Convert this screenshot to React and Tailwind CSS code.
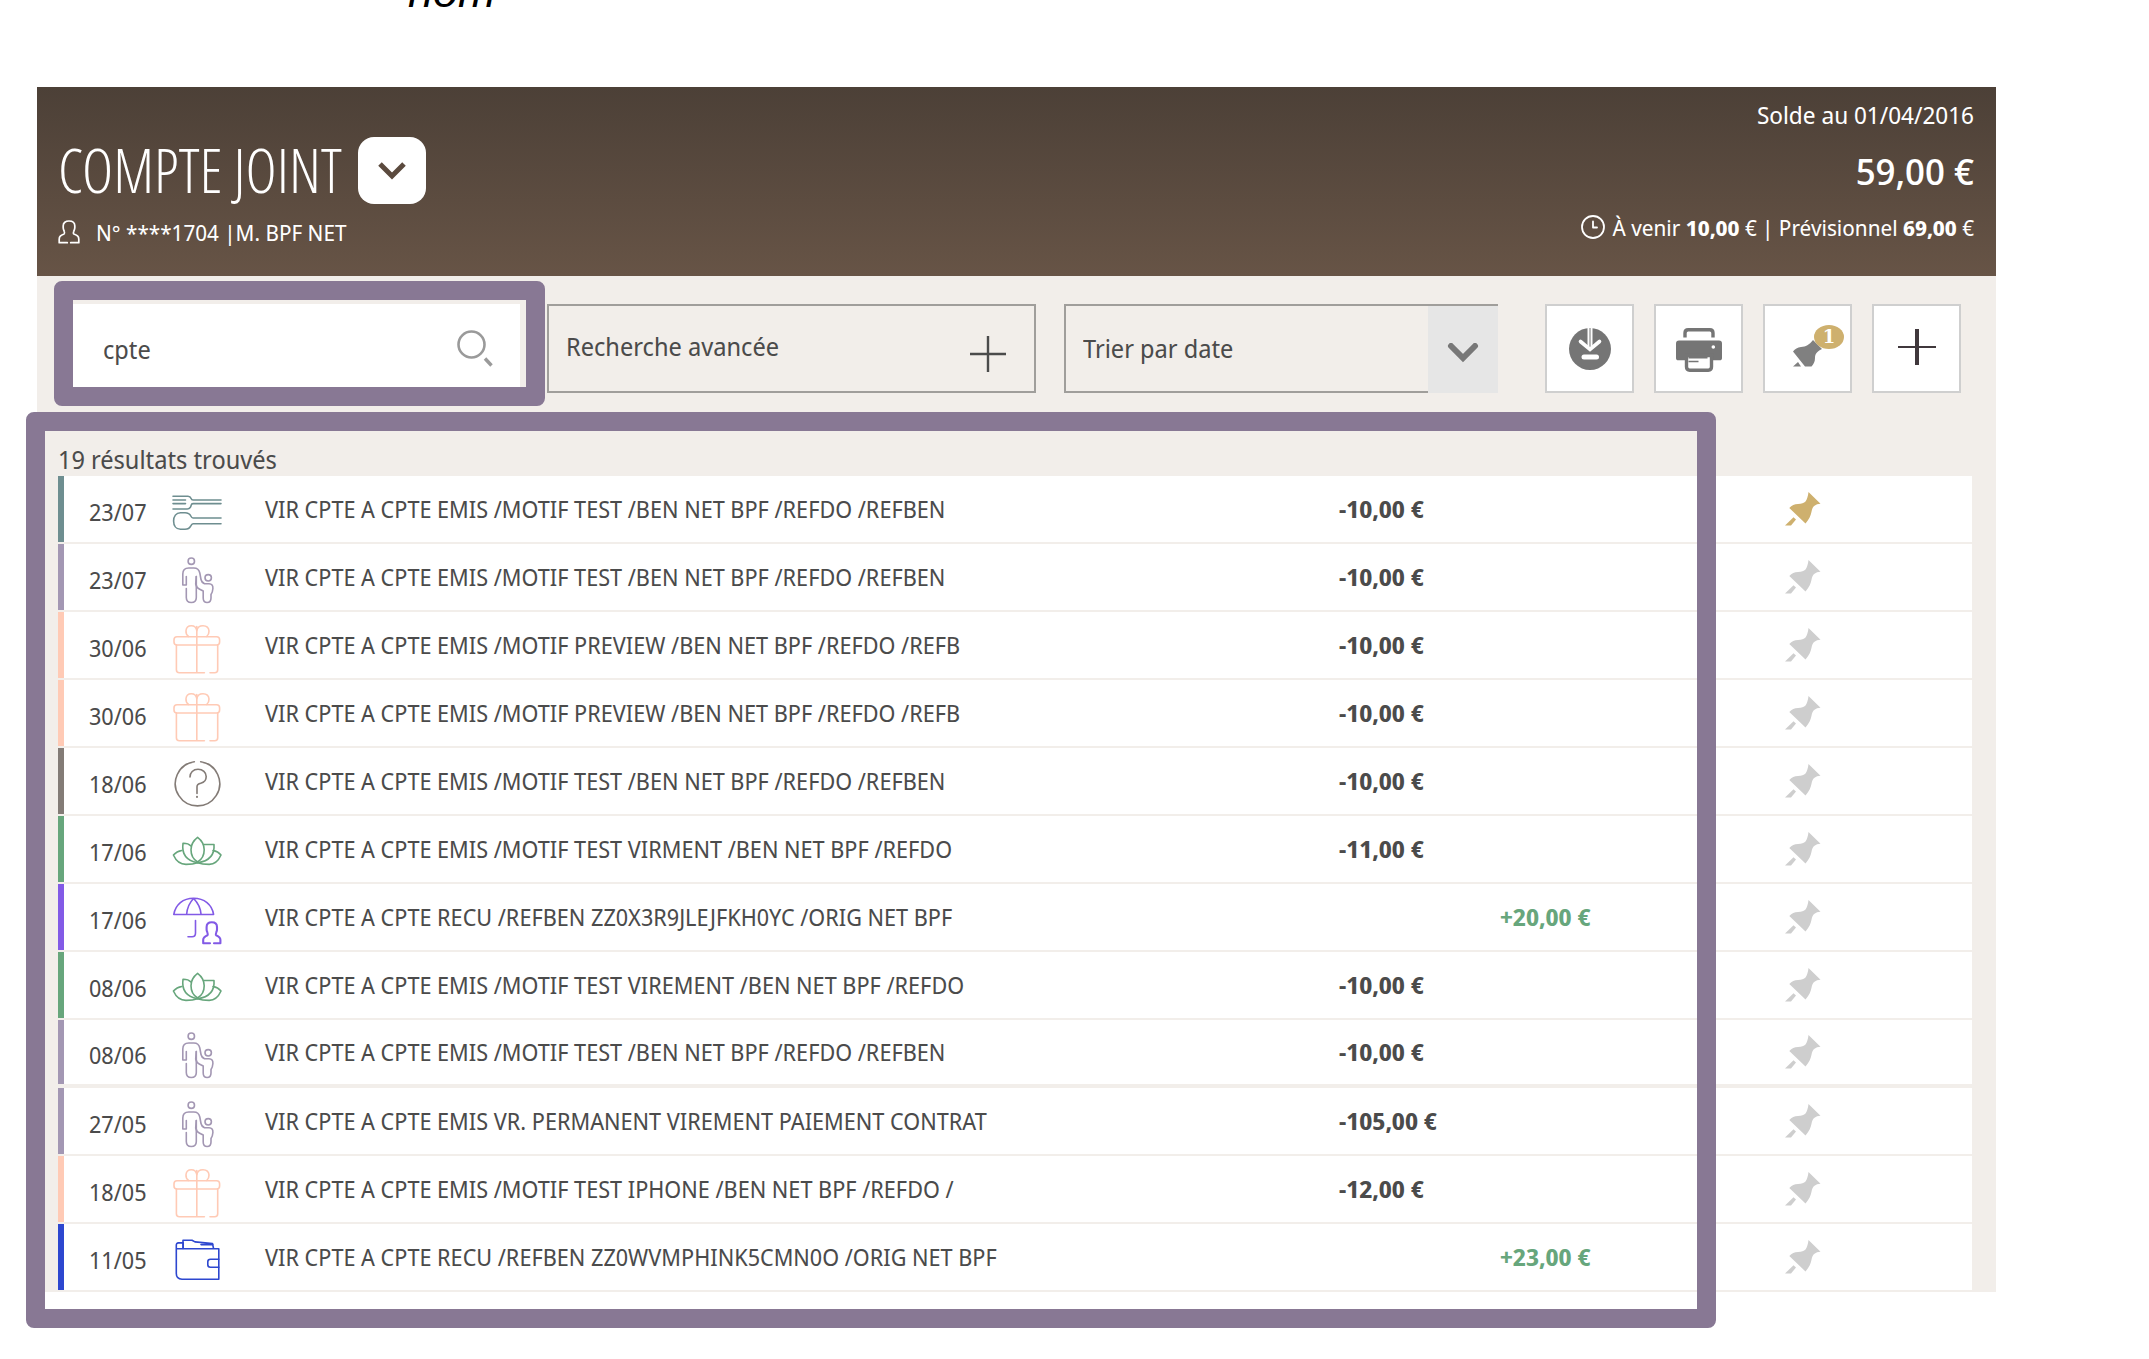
const svg = { fill: "none", stroke: "currentColor", strokeLinecap: "round", strokeLinejoin: "round", "aria-hidden": true };

function CategoryIcon({ name, className }) {
  return (
    <svg viewBox="0 0 48 48" className={`size-12 overflow-visible ${className}`} strokeWidth="1.6" {...svg}>
      {ICONS[name]}
    </svg>
  );
}

const ICONS = {
  restaurant: (
    <>
      <path d="M0 7.3h15c2.6 0 2.8 1.3 3.2 2.4.2.9.8 1.3 1.800 1.3h28M0 11h12.5M0 14.6h12.5M48 14.6H20c-1 0-1.600.6-1.800 1.600-.5 2.400-1.400 3.800-4 3.800H0" />
      <path d="M48 29H20c-1.200 0-1.600-.8-2.200-2-1.100-2.300-3.300-3.300-5.800-3.300H7.500C3 23.700.6 27.400.6 32s2.400 8.300 6.900 8.300H12c2.500 0 4.700-1.200 5.800-3.400.6-1.300 1-2.200 2.200-2.200h28" />
    </>
  ),
  family: (
    <>
      <circle cx="18.300" cy="4.200" r="3.200" />
      <path d="M13.300 19.500v8.500H9.800V17q0-6 6-6h5q5 0 6 5l1.200 6.500q.6 3 3.500 4.300h4.500q4.200.2 3.900 4.700-.2 3.500-1.900 6v3.500q0 4.500-3.900 4.500t-3.900-4.500v-7l-3.500-1.800q-3.300-1.600-4-5.200L23.300 19.500" />
      <path d="M13.300 31.500v9q0 5 5 5t5-5v-21" />
      <circle cx="35.200" cy="20.800" r="3.200" />
    </>
  ),
  gift: (
    <>
      <rect x="1" y="11.700" width="45.600" height="8.300" rx="3" />
      <path d="M3.400 20v24.700c0 2 1 3 3 3h25M37 47.700h4.700c2 0 3-1 3-3V20M23.800 1.500v46" />
      <path d="M15.500 11.500C13.500 10 12.800 7.800 13 5.600 13.300 2.500 15.500.7 18.300.7c2.700 0 5 1.500 5.500 5C24.300 2.200 27 .7 30 .7c3.500 0 5.800 2.200 6 5.300.1 2.300-.8 4.200-2.300 5.500" />
    </>
  ),
  question: (
    <>
      <path d="M21.300.7a22.200 22.200 0 1 0 6.400 0" />
      <path d="M17 16c0-4.500 3.200-7.700 8-7.700s8.200 3 8.200 7.300c0 4.200-2.300 6-5.400 6.600-2.600.5-3.800 1.400-3.800 3.600v6.700" />
      <path d="M24 35.700v.2" strokeWidth="2" />
    </>
  ),
  lotus: (
    <>
      <path d="M24.600 8.300C20.300 11.500 18 15.700 18 20.800c0 5.700 2.500 9.800 6.600 12.200 4.100-2.400 6.600-6.500 6.600-12.200 0-5.100-2.300-9.300-6.600-12.500z" />
      <path d="M18 17c-1.800-1.800-4.500-2.800-8-2.700-1.400 9.700 2.500 17 14.600 19.500M31.200 15.500h9.800c.8 10-4.500 16.500-16.400 18.300" />
      <path d="M8.700 21.500C5.500 22 2.700 23.500.4 26c2.600 5.800 6.600 9.400 12.600 9.400 4.500 0 8.300-.4 11.600-1.600 3.300 1.200 7.100 1.600 11.600 1.600 6 0 9.400-4 11.800-9.400-2-2.500-4.800-4-8-4.500" />
    </>
  ),
  insurance: (
    <>
      <path d="M.8 17.500C2.500 7.500 10 1.300 20.600 1.300S39 7.500 40.600 17.500zM20.600 1.500c-4 4-6.500 9.500-7 16M20.600 1.500c4 4 7 9.500 7.500 16M22.500 23.500V36c0 2.500-1 3.700-3.400 3.700H15" />
      <path d="M37 46.300h-6.800v-3.500c0-2.600 1.200-3.300 4.300-4.600.6-.3.300-1.300 0-2.400-.2-.9-.9-1.500-.9-3.300v-2.600c0-3 2-4.700 5.200-4.700s5.200 1.700 5.200 4.700v2.600c0 1.800-.7 2.400-.9 3.300-.3 1.100-.6 2.100 0 2.400 3.100 1.300 4.300 2 4.300 4.600v3.500H41" strokeWidth="2.100" />
    </>
  ),
  wallet: (
    <>
      <path d="M3.300 11.700h42.500v30.600H9c-3.700-.2-5.700-2.200-5.700-5.800V8.300c0-1.600.7-2.400 2.200-2.400h4.700v5" />
      <path d="M10 11.500V3.200h9l3 1.700 17.500 1.600 1 4.800M28 7.600h12" />
      <path d="M45.800 22.300h-8.300c-1.800 0-2.700 1-2.700 2.500v3c0 1.500.9 2.500 2.700 2.500h8.300" />
    </>
  ),
};

function PersonIcon() {
  return (
    <svg viewBox="0 0 22 24" className="h-6 w-[22px]" strokeWidth="1.7" {...svg}>
      <path d="M9.300 22.700H1.200v-3.400c0-3 1.300-3.700 4.900-5.300.8-.4.500-1.600.1-2.700-.3-1-1-1.700-1-3.700V5.800C5.200 2.700 7.600 1 11 1s5.800 1.700 5.800 4.800v1.800c0 2-.7 2.700-1 3.700-.4 1.100-.7 2.300.1 2.700 3.600 1.600 4.900 2.300 4.900 5.300v3.400h-8.100" />
    </svg>
  );
}

function PinIcon({ className }) {
  return (
    <svg viewBox="0 0 36 34" className={`h-[34px] w-9 ${className}`} fill="currentColor" aria-hidden="true">
      <path d="M23.500 0l12 11.800c-2.500.3-4.500.7-6 1.900-1.700 1.300-2.500 3.300-3 6C25.700 24 24 27.500 20.500 31.500L4.300 16c2.500-2.500 5.200-3.700 8.700-3.900 3.500-.3 6-.8 7.500-2.600C22 7.500 23 4 23.500 0z" />
      <path d="M0 33.500l8.500-8.300 2.500 2.300-5 6z" />
    </svg>
  );
}

function DownloadIcon() {
  return (
    <svg viewBox="0 0 42 42" className="size-[42px] text-[#757575]" aria-hidden="true">
      <circle cx="21" cy="21" r="21" fill="currentColor" />
      <path d="M21 -1v20" stroke="#fff" strokeWidth="5" fill="none" />
      <path d="M21 -1v22" stroke="#757575" strokeWidth="1" fill="none" />
      <path d="M11.500 13.500L21 21.500l9.500-8" stroke="#fff" strokeWidth="3.600" fill="none" strokeLinecap="round" />
      <path d="M15 29h12.500" stroke="#fff" strokeWidth="5" strokeLinecap="round" />
    </svg>
  );
}

function PrinterIcon() {
  return (
    <svg viewBox="0 0 46 44" className="h-11 w-[46px] text-[#757575]" aria-hidden="true">
      <path d="M9 9.500V5c0-2 1.200-3.300 3.200-3.300h21.600c2 0 3.200 1.300 3.200 3.300v4.500" stroke="currentColor" strokeWidth="3.400" fill="none" />
      <path d="M3 12.500h40c2 0 3 1 3 3V30c0 1.500-.8 2.300-2.300 2.300H2.300C.8 32.300 0 31.500 0 30V15.500c0-2 1-3 3-3z" fill="currentColor" />
      <circle cx="37.300" cy="19" r="1.800" fill="#fff" />
      <path d="M10.500 27.500h25v11.300c0 2.200-1 3.400-3.200 3.400H13.700c-2.200 0-3.200-1.200-3.200-3.400z" fill="#fff" stroke="currentColor" strokeWidth="3.400" />
      <path d="M12.500 29.800h19M12.500 33.500h10" stroke="currentColor" strokeWidth="1.600" />
    </svg>
  );
}

const OPERATIONS = [
  ["23/07", "restaurant", "VIR CPTE A CPTE EMIS /MOTIF TEST /BEN NET BPF /REFDO /REFBEN", "-10,00 €"],
  ["23/07", "family", "VIR CPTE A CPTE EMIS /MOTIF TEST /BEN NET BPF /REFDO /REFBEN", "-10,00 €"],
  ["30/06", "gift", "VIR CPTE A CPTE EMIS /MOTIF PREVIEW /BEN NET BPF /REFDO /REFB", "-10,00 €"],
  ["30/06", "gift", "VIR CPTE A CPTE EMIS /MOTIF PREVIEW /BEN NET BPF /REFDO /REFB", "-10,00 €"],
  ["18/06", "question", "VIR CPTE A CPTE EMIS /MOTIF TEST /BEN NET BPF /REFDO /REFBEN", "-10,00 €"],
  ["17/06", "lotus", "VIR CPTE A CPTE EMIS /MOTIF TEST VIRMENT /BEN NET BPF /REFDO", "-11,00 €"],
  ["17/06", "insurance", "VIR CPTE A CPTE RECU /REFBEN ZZ0X3R9JLEJFKH0YC /ORIG NET BPF", "+20,00 €"],
  ["08/06", "lotus", "VIR CPTE A CPTE EMIS /MOTIF TEST VIREMENT /BEN NET BPF /REFDO", "-10,00 €"],
  ["08/06", "family", "VIR CPTE A CPTE EMIS /MOTIF TEST /BEN NET BPF /REFDO /REFBEN", "-10,00 €"],
  ["27/05", "family", "VIR CPTE A CPTE EMIS VR. PERMANENT VIREMENT PAIEMENT CONTRAT", "-105,00 €"],
  ["18/05", "gift", "VIR CPTE A CPTE EMIS /MOTIF TEST IPHONE /BEN NET BPF /REFDO /", "-12,00 €"],
  ["11/05", "wallet", "VIR CPTE A CPTE RECU /REFBEN ZZ0WVMPHINK5CMN0O /ORIG NET BPF", "+23,00 €"],
];

const TONES = {
  restaurant: ["border-[#6e8e90]", "text-[#6e8e90]"],
  family: ["border-[#a397b3]", "text-[#a397b3]"],
  gift: ["border-[#ffcab5]", "text-[#ffcab5]"],
  question: ["border-[#837b76]", "text-[#837b76]"],
  lotus: ["border-[#67a67c]", "text-[#67a67c]"],
  insurance: ["border-[#825ae6]", "text-[#825ae6]"],
  wallet: ["border-[#2d47cf]", "text-[#2d47cf]"],
};

function OperationRow({ operation, pinned, lastOfMonth }) {
  const [date, category, label, amount] = operation;
  const [border, text] = TONES[category];
  const credit = amount.startsWith("+");
  const line = lastOfMonth ? "border-b-4" : "border-b-2";
  const height = lastOfMonth ? "h-16" : "h-[66px]";
  return (
    <tr className="[&>td]:border-[#f2eeea]">
      <td className={`p-0 ${line}`}>
        <div className={`flex items-center border-l-[6px] pt-1.5 pl-[25px] ${height} ${border}`}>{date}</div>
      </td>
      <td className={`p-0 pt-2 pl-[11px] ${line}`}>
        <CategoryIcon name={category} className={text} />
      </td>
      <td className={`p-0 pl-[31px] ${line}`}>{label}</td>
      <td className={`p-0 text-2xl font-bold ${line}`}>{credit ? "" : amount}</td>
      <td className={`p-0 text-2xl font-bold text-[#67a67c] ${line}`}>{credit ? amount : ""}</td>
      <td className={`p-0 pl-[70px] ${line}`}>
        <button type="button" aria-label="Épingler l'opération" className="block">
          <PinIcon className={pinned ? "text-[#ceb06e]" : "text-[#cecece]"} />
        </button>
      </td>
    </tr>
  );
}

const toolButton = "relative flex size-[89px] items-center justify-center border-2 border-[#cfcfcf] bg-white";

export default function App() {
  return (
    <main className="bg-white pb-16 font-['Noto_Sans_Display','Noto_Sans',sans-serif] text-[23px] text-[#4b4b4b]">
      <div className="h-[87px] overflow-hidden pl-[408px]">
        <p className="-mt-8 font-['Liberation_Sans',Arial,sans-serif] text-[45px] leading-[48px] text-black italic">nom</p>
      </div>

      <section className="mr-[153px] ml-[37px] bg-[#f2eeea]">
        <header className="flex justify-between bg-linear-to-b from-[#4c4037] to-[#675446] pr-[22px] pl-[21px] text-[22px] text-white">
          <div className="pt-[50px] pb-7">
            <div className="flex items-center gap-4">
              <h1 className="font-['Open_Sans_Condensed_Light','Open_Sans_Condensed','Roboto_Condensed',sans-serif] text-[60px] leading-[67px] font-light">
                COMPTE JOINT
              </h1>
              <button type="button" aria-label="Choisir un compte" className="flex h-[67px] w-[68px] items-center justify-center rounded-2xl bg-white text-[#5b4a3e]">
                <svg viewBox="0 0 28 18" className="h-[18px] w-7" fill="none" stroke="currentColor" strokeWidth="5" aria-hidden="true">
                  <path d="M2 2l12 12L26 2" />
                </svg>
              </button>
            </div>
            <p className="mt-3 flex items-center gap-4 leading-8">
              <PersonIcon />
              N° ****1704 |M. BPF NET
            </p>
          </div>
          <div className="pt-3 text-right leading-8">
            <p className="text-2xl leading-8">Solde au 01/04/2016</p>
            <p className="mt-4 text-[37px] leading-[48px] font-medium">59,00 €</p>
            <p className="mt-4 flex items-center justify-end gap-2">
              <svg viewBox="0 0 24 24" className="size-6" strokeWidth="1.800" {...svg}>
                <circle cx="12" cy="12" r="11" />
                <path d="M12 6.500V12.500h4" />
              </svg>
              <span>
                À venir <b>10,00</b> € | Prévisionnel <b>69,00</b> €
              </span>
            </p>
          </div>
        </header>

        <form
          className="grid grid-cols-[489fr_517fr_481fr_auto] pt-7 pr-[35px] pl-[21px] text-[25px]"
          onSubmit={(e) => e.preventDefault()}
        >
          <div className="relative mr-[27px] flex h-[89px] items-center bg-white pr-[27px]">
            <input aria-label="Rechercher une opération" defaultValue="cpte" className="h-full w-full min-w-0 bg-transparent pl-[45px] outline-none" />
            <button type="submit" aria-label="Rechercher" className="shrink-0 text-[#9a9a9a]">
              <svg viewBox="0 0 36 38" className="h-[38px] w-9" strokeWidth="2.600" {...svg}>
                <ellipse cx="14.500" cy="14.500" rx="13" ry="13" />
                <path d="M28 28.500l6.500 7" strokeWidth="3.400" strokeLinecap="butt" />
              </svg>
            </button>
            <div className="pointer-events-none absolute -top-[23px] -right-[25px] -bottom-[13px] -left-1 rounded-lg border-[19px] border-[#887894]" />
          </div>

          <button type="button" className="mr-7 flex items-center justify-between border-2 border-[#a09e9b] pr-7 pb-1 pl-[17px] text-left">
            Recherche avancée
            <svg viewBox="0 0 36 36" className="mt-3.5 size-9" stroke="currentColor" strokeWidth="2.400" aria-hidden="true">
              <path d="M18 0v36M0 18h36" />
            </svg>
          </button>

          <div className="relative mr-[47px]">
            <select aria-label="Trier" className="size-full appearance-none border-2 border-r-0 border-[#a09e9b] bg-transparent pl-[17px]">
              <option>Trier par date</option>
              <option>Trier par montant</option>
            </select>
            <span className="pointer-events-none absolute top-0.5 right-0 bottom-0 flex w-[70px] items-center justify-center bg-[#e6e6e6] pt-1.5 text-[#787878]">
              <svg viewBox="0 0 32 20" className="h-5 w-8" strokeWidth="6" fill="none" stroke="currentColor" strokeLinecap="round" aria-hidden="true">
                <path d="M4 3l12 12L28 3" />
              </svg>
            </span>
          </div>

          <div className="flex gap-5">
            <button type="button" aria-label="Télécharger" className={toolButton}>
              <DownloadIcon />
            </button>
            <button type="button" aria-label="Imprimer" className={`${toolButton} pt-0.5`}>
              <PrinterIcon />
            </button>
            <button type="button" aria-label="Opérations épinglées" className={toolButton}>
              <svg viewBox="0 0 32 30" className="mt-2 h-[30px] w-8 text-[#808080]" fill="currentColor" aria-hidden="true">
                <path d="M1 13.500c2-2.500 4.500-4 8-4.500 5-.5 8-2 12-7l9 9c-4 2-7 4-7 9 0 4-1.500 6-3.500 8.500H13z" />
                <path d="M1 28.500l5-4.500 3 4.500z" />
              </svg>
              <span className="absolute top-[19px] right-1.5 flex h-6 w-[30px] items-center justify-center rounded-[50%] bg-[#ceb06e] font-['DejaVu_Serif',serif] text-lg leading-none font-bold text-white">
                1
              </span>
            </button>
            <button type="button" aria-label="Ajouter" className={toolButton}>
              <svg viewBox="0 0 38 36" className="mb-1 h-9 w-[38px] text-[#40383c]" stroke="currentColor" aria-hidden="true">
                <path d="M19 0v36" strokeWidth="4" />
                <path d="M0 18h38" strokeWidth="2" />
              </svg>
            </button>
          </div>
        </form>

        <div className="relative mt-[51px] mr-6 ml-[21px]">
          <h2 className="pb-0.5 text-[25px] leading-[30px]">19 résultats trouvés</h2>
          <table className="w-full table-fixed border-separate border-spacing-0 bg-white text-left" aria-label="Opérations du compte">
            <colgroup>
              <col className="w-[104px]" />
              <col className="w-[72px]" />
              <col />
              <col className="w-[161px]" />
              <col className="w-[215px]" />
              <col className="w-[257px]" />
            </colgroup>
            <tbody>
              {OPERATIONS.map((operation, i) => (
                <OperationRow key={i} operation={operation} pinned={i === 0} lastOfMonth={i === 8} />
              ))}
            </tbody>
          </table>
          <div className="pointer-events-none absolute -top-8 right-64 -bottom-9 -left-8 rounded-lg border-[19px] border-[#887894]" />
        </div>
      </section>
    </main>
  );
}
